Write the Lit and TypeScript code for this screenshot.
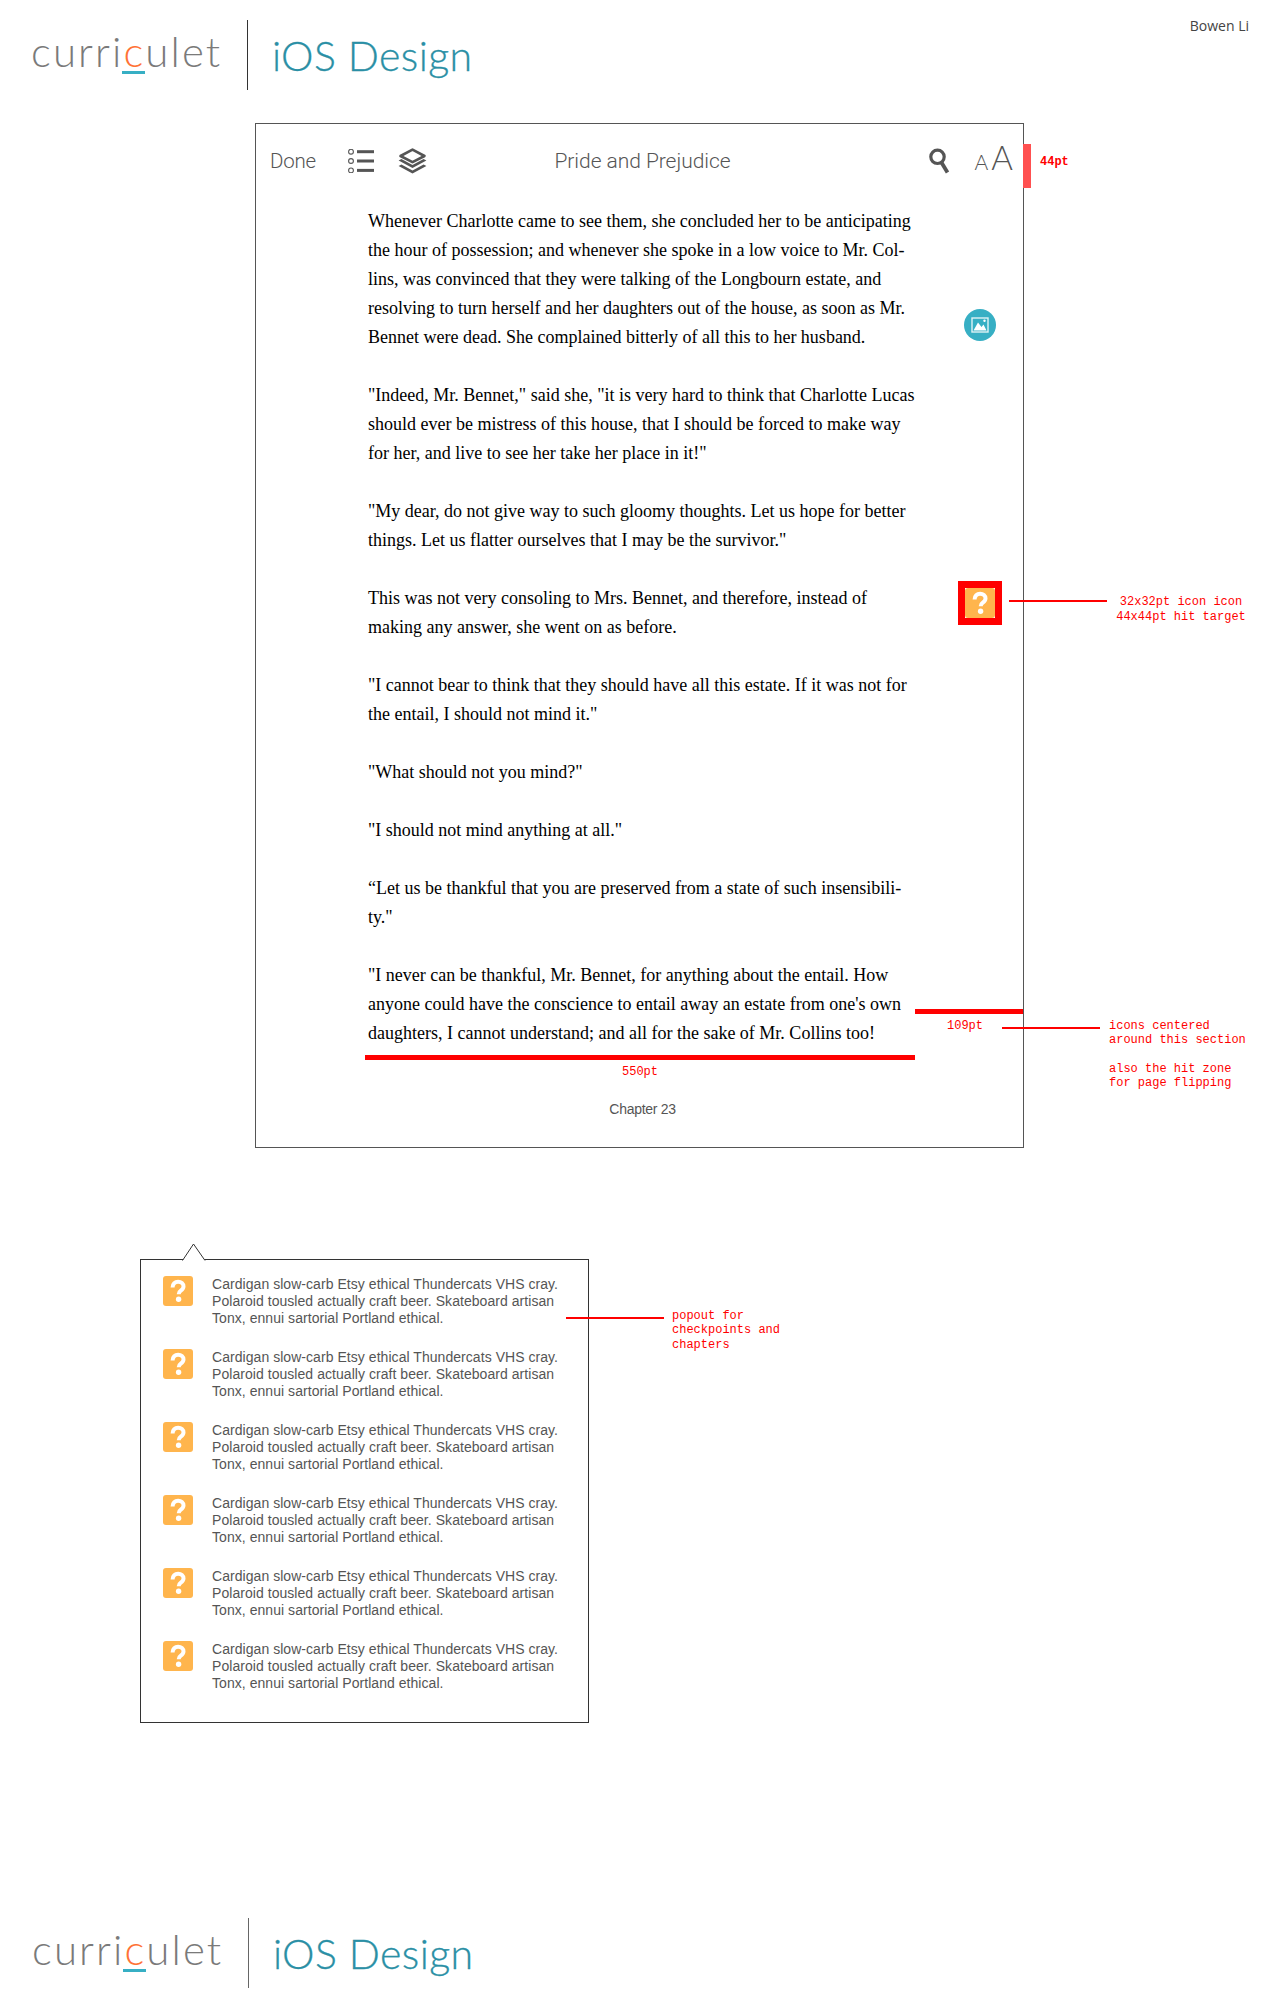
import { LitElement, html, css, svg } from "lit";
import { customElement } from "lit/decorators.js";

const paragraphs: string[][] = [
  [
    "Whenever Charlotte came to see them, she concluded her to be anticipating",
    "the hour of possession; and whenever she spoke in a low voice to Mr. Col-",
    "lins, was convinced that they were talking of the Longbourn estate, and",
    "resolving to turn herself and her daughters out of the house, as soon as Mr.",
    "Bennet were dead. She complained bitterly of all this to her husband.",
  ],
  [
    "\"Indeed, Mr. Bennet,\" said she, \"it is very hard to think that Charlotte Lucas",
    "should ever be mistress of this house, that I should be forced to make way",
    "for her, and live to see her take her place in it!\"",
  ],
  [
    "\"My dear, do not give way to such gloomy thoughts. Let us hope for better",
    "things. Let us flatter ourselves that I may be the survivor.\"",
  ],
  [
    "This was not very consoling to Mrs. Bennet, and therefore, instead of",
    "making any answer, she went on as before.",
  ],
  [
    "\"I cannot bear to think that they should have all this estate. If it was not for",
    "the entail, I should not mind it.\"",
  ],
  ["\"What should not you mind?\""],
  ["\"I should not mind anything at all.\""],
  [
    "“Let us be thankful that you are preserved from a state of such insensibili-",
    "ty.\"",
  ],
  [
    "\"I never can be thankful, Mr. Bennet, for anything about the entail. How",
    "anyone could have the conscience to entail away an estate from one's own",
    "daughters, I cannot understand; and all for the sake of Mr. Collins too!",
  ],
];

const question = svg`<svg class="q" viewBox="0 0 30 30" width="30" height="30" aria-hidden="true">
  <rect width="30" height="30" rx="3" fill="#ffb54d"/>
  <path d="M9.6 11.4c0-3.6 2.4-5.6 5.5-5.6s5.4 1.9 5.4 4.7c0 2-1 3-2.7 4.2-1.6 1.1-2.1 1.8-2.1 3.6" fill="none" stroke="#fff" stroke-width="4"/>
  <circle cx="15.6" cy="23.2" r="2.7" fill="#fff"/>
</svg>`;

const popItems = [0, 1, 2, 3, 4, 5];

@customElement("app-root")
export class AppRoot extends LitElement {
  static styles = css`
    :host {
      display: block;
      position: relative;
      width: 1280px;
      height: 2000px;
      background: #fff;
      overflow: hidden;
      font-family: "Liberation Sans", Arial, sans-serif;
    }
    p { margin: 0; }
    .header { display: flex; justify-content: space-between; align-items: flex-start; }
    .logo { display: flex; align-items: flex-start; height: 70px; margin-top: 20px; padding-left: 31px; font-family: Lato, sans-serif; font-weight: 300; }
    .mark { width: 216px; font-size: 42px; line-height: 62px; letter-spacing: 2.1px; color: #7a7a7a; white-space: nowrap; }
    .mark span { position: relative; display: inline-block; color: #ff7236; }
    .mark span::after { content: ""; position: absolute; left: -1px; right: 0; top: 51px; height: 3px; background: #37afc4; }
    .rule { width: 1px; height: 70px; background: #333; flex: none; }
    .ios { margin-left: 24px; font-size: 41px; line-height: 72px; letter-spacing: 0.4px; color: #2a8fa5; white-space: nowrap; -webkit-text-stroke: 0.3px #2a8fa5; }
    .author { margin: 16px 31px 0 0; font: 400 14px/20px "Open Sans", sans-serif; color: #444; }

    .device { box-sizing: border-box; width: 769px; height: 1025px; margin: 33px 0 0 255px; border: 1px solid #555; padding-top: 20px; }
    .toolbar { box-sizing: border-box; display: grid; grid-template-columns: 1fr auto 1fr; grid-template-rows: 34px; align-items: center; height: 44px; padding: 0 10px 10px 14px; color: #555; font-family: Roboto, sans-serif; font-weight: 300; }
    .tools-left { display: flex; align-items: center; }
    .done { font-size: 20.5px; letter-spacing: -0.2px; margin-right: 32px; }
    .layers { margin-left: 24px; }
    .title { margin-left: 2px; font-size: 21px; letter-spacing: -0.05px; }
    .tools-right { display: flex; align-items: center; justify-content: flex-end; }
    .font-size { display: flex; align-items: baseline; margin-left: 25px; padding-bottom: 8px; font-family: Lato, sans-serif; font-weight: 300; }
    .a-small { font-size: 21px; margin-right: 3px; }
    .a-big { font-size: 33px; }
    .book { margin: 19px 0 0 112px; font: 18px/29px "Liberation Serif", "Times New Roman", serif; color: #000; white-space: nowrap; }
    .book p + p { margin-top: 29px; }
    .chapter { margin: 53px 0 0 0; padding-left: 6px; text-align: center; font-size: 14px; line-height: 16px; letter-spacing: -0.3px; color: #555; }

    .popout { position: relative; box-sizing: border-box; width: 449px; height: 464px; margin: 111px 0 0 140px; border: 1px solid #333; padding-top: 16px; }
    .arrow { position: absolute; left: 41px; top: -17px; }
    .item { display: flex; gap: 19px; height: 73px; padding-left: 22px; }
    .q { display: block; flex: none; }
    .item p { font-size: 14px; line-height: 17px; letter-spacing: 0.05px; color: #555; white-space: nowrap; }

    .footer .logo { margin: 195px 0 0 1px; }
    .footer .rule { background: #666; }

    .ann { position: absolute; }
    .fill { background: #f00; }
    .note { font: 12px/14.25px "Liberation Mono", "Courier New", monospace; color: #f00; white-space: pre; }
    .bar44 { left: 1023px; top: 144px; width: 8px; height: 44px; background: #ff5050; }
    .t44 { left: 1040px; top: 155px; font-weight: bold; }
    .hit { left: 958px; top: 581px; width: 30px; height: 30px; border: 7px solid #f00; }
    .l-hit { left: 1009px; top: 600px; width: 98px; height: 2px; }
    .t-hit { left: 1115px; top: 595px; width: 132px; text-align: center; line-height: 15px; }
    .teal { left: 964px; top: 309px; }
    .bar109 { left: 915px; top: 1009px; width: 108px; height: 5px; }
    .bar550 { left: 365px; top: 1055px; width: 550px; height: 5px; }
    .t109 { left: 947px; top: 1019px; }
    .l109 { left: 1002px; top: 1027px; width: 98px; height: 2px; }
    .t-sec { left: 1109px; top: 1019px; }
    .t550 { left: 622px; top: 1065px; }
    .l-pop { left: 566px; top: 1317px; width: 98px; height: 2px; }
    .t-pop { left: 672px; top: 1309px; }
  `;

  private logo() {
    return html`<div class="logo">
      <div class="mark">curri<span>c</span>ulet</div>
      <div class="rule"></div>
      <div class="ios">iOS Design</div>
    </div>`;
  }

  render() {
    return html`
      <div class="header">
        ${this.logo()}
        <div class="author">Bowen Li</div>
      </div>

      <section class="device">
        <div class="toolbar">
          <div class="tools-left">
            <span class="done">Done</span>
            <svg width="26" height="24" viewBox="0 0 26 24" aria-hidden="true">
              <g fill="none" stroke="#555" stroke-width="1.1"><circle cx="3" cy="2.7" r="2.4"/><circle cx="3" cy="12" r="2.4"/><circle cx="3" cy="21.4" r="2.4"/></g>
              <g fill="#555"><rect x="9" y="1.2" width="17" height="3"/><rect x="9" y="10.5" width="17" height="3"/><rect x="9" y="19.9" width="17" height="3"/></g>
            </svg>
            <svg class="layers" width="29" height="26" viewBox="0 0 29 26" aria-hidden="true">
              <path d="M14.5 1.6 26.5 8 14.5 14.2 2.5 8Z" fill="none" stroke="#555" stroke-width="2.6" stroke-linejoin="round"/>
              <path d="M3.4 11 .6 12.6 14.5 20 28.4 12.6 25.6 11 14.5 17Z" fill="#555"/>
              <path d="M3.4 16.4 .6 18 14.5 25.6 28.4 18 25.6 16.4 14.5 22.4Z" fill="#555"/>
            </svg>
          </div>
          <div class="title">Pride and Prejudice</div>
          <div class="tools-right">
            <svg width="21" height="26" viewBox="0 0 21 26" aria-hidden="true">
              <circle cx="8.5" cy="8.8" r="6.7" fill="none" stroke="#555" stroke-width="3.2"/>
              <path d="M12.5 14.5 18.5 24.5" stroke="#555" stroke-width="3.8"/>
            </svg>
            <div class="font-size"><span class="a-small">A</span><span class="a-big">A</span></div>
          </div>
        </div>

        <article class="book">
          ${paragraphs.map((lines) => html`<p>${lines.map((l, i) => html`${i ? html`<br />` : ""}${l}`)}</p>`)}
        </article>

        <div class="chapter">Chapter 23</div>
      </section>

      <section class="popout">
        <svg class="arrow" width="24" height="18" viewBox="0 0 24 18" aria-hidden="true">
          <path d="M0.5 17.5 11.5 1 23 17.5" fill="#fff" stroke="#333" stroke-width="1"/>
        </svg>
        ${popItems.map(
          () => html`<div class="item">
            ${question}
            <p>Cardigan slow-carb Etsy ethical Thundercats VHS cray.<br />Polaroid tousled actually craft beer. Skateboard artisan<br />Tonx, ennui sartorial Portland ethical.</p>
          </div>`
        )}
      </section>

      <div class="footer">${this.logo()}</div>

      <div class="ann bar44"></div>
      <div class="ann note t44">44pt</div>

      <svg class="ann teal" width="32" height="32" viewBox="0 0 32 32" aria-hidden="true">
        <circle cx="16" cy="16" r="16" fill="#37afc4"/>
        <rect x="8" y="9" width="16" height="14" fill="none" stroke="#dff2f6" stroke-width="1.4"/>
        <path d="M9.5 21.5 14 13.5 17.5 18 19.5 15.5 22.5 21.5Z" fill="#fff"/>
        <circle cx="20.5" cy="11.8" r="1.2" fill="#fff"/>
      </svg>

      <div class="ann hit">${question}</div>
      <div class="ann fill l-hit"></div>
      <div class="ann note t-hit">32x32pt icon icon
44x44pt hit target</div>

      <div class="ann fill bar109"></div>
      <div class="ann fill bar550"></div>
      <div class="ann note t109">109pt</div>
      <div class="ann fill l109"></div>
      <div class="ann note t-sec">icons centered
around this section

also the hit zone
for page flipping</div>
      <div class="ann note t550">550pt</div>

      <div class="ann fill l-pop"></div>
      <div class="ann note t-pop">popout for
checkpoints and
chapters</div>
    `;
  }
}
